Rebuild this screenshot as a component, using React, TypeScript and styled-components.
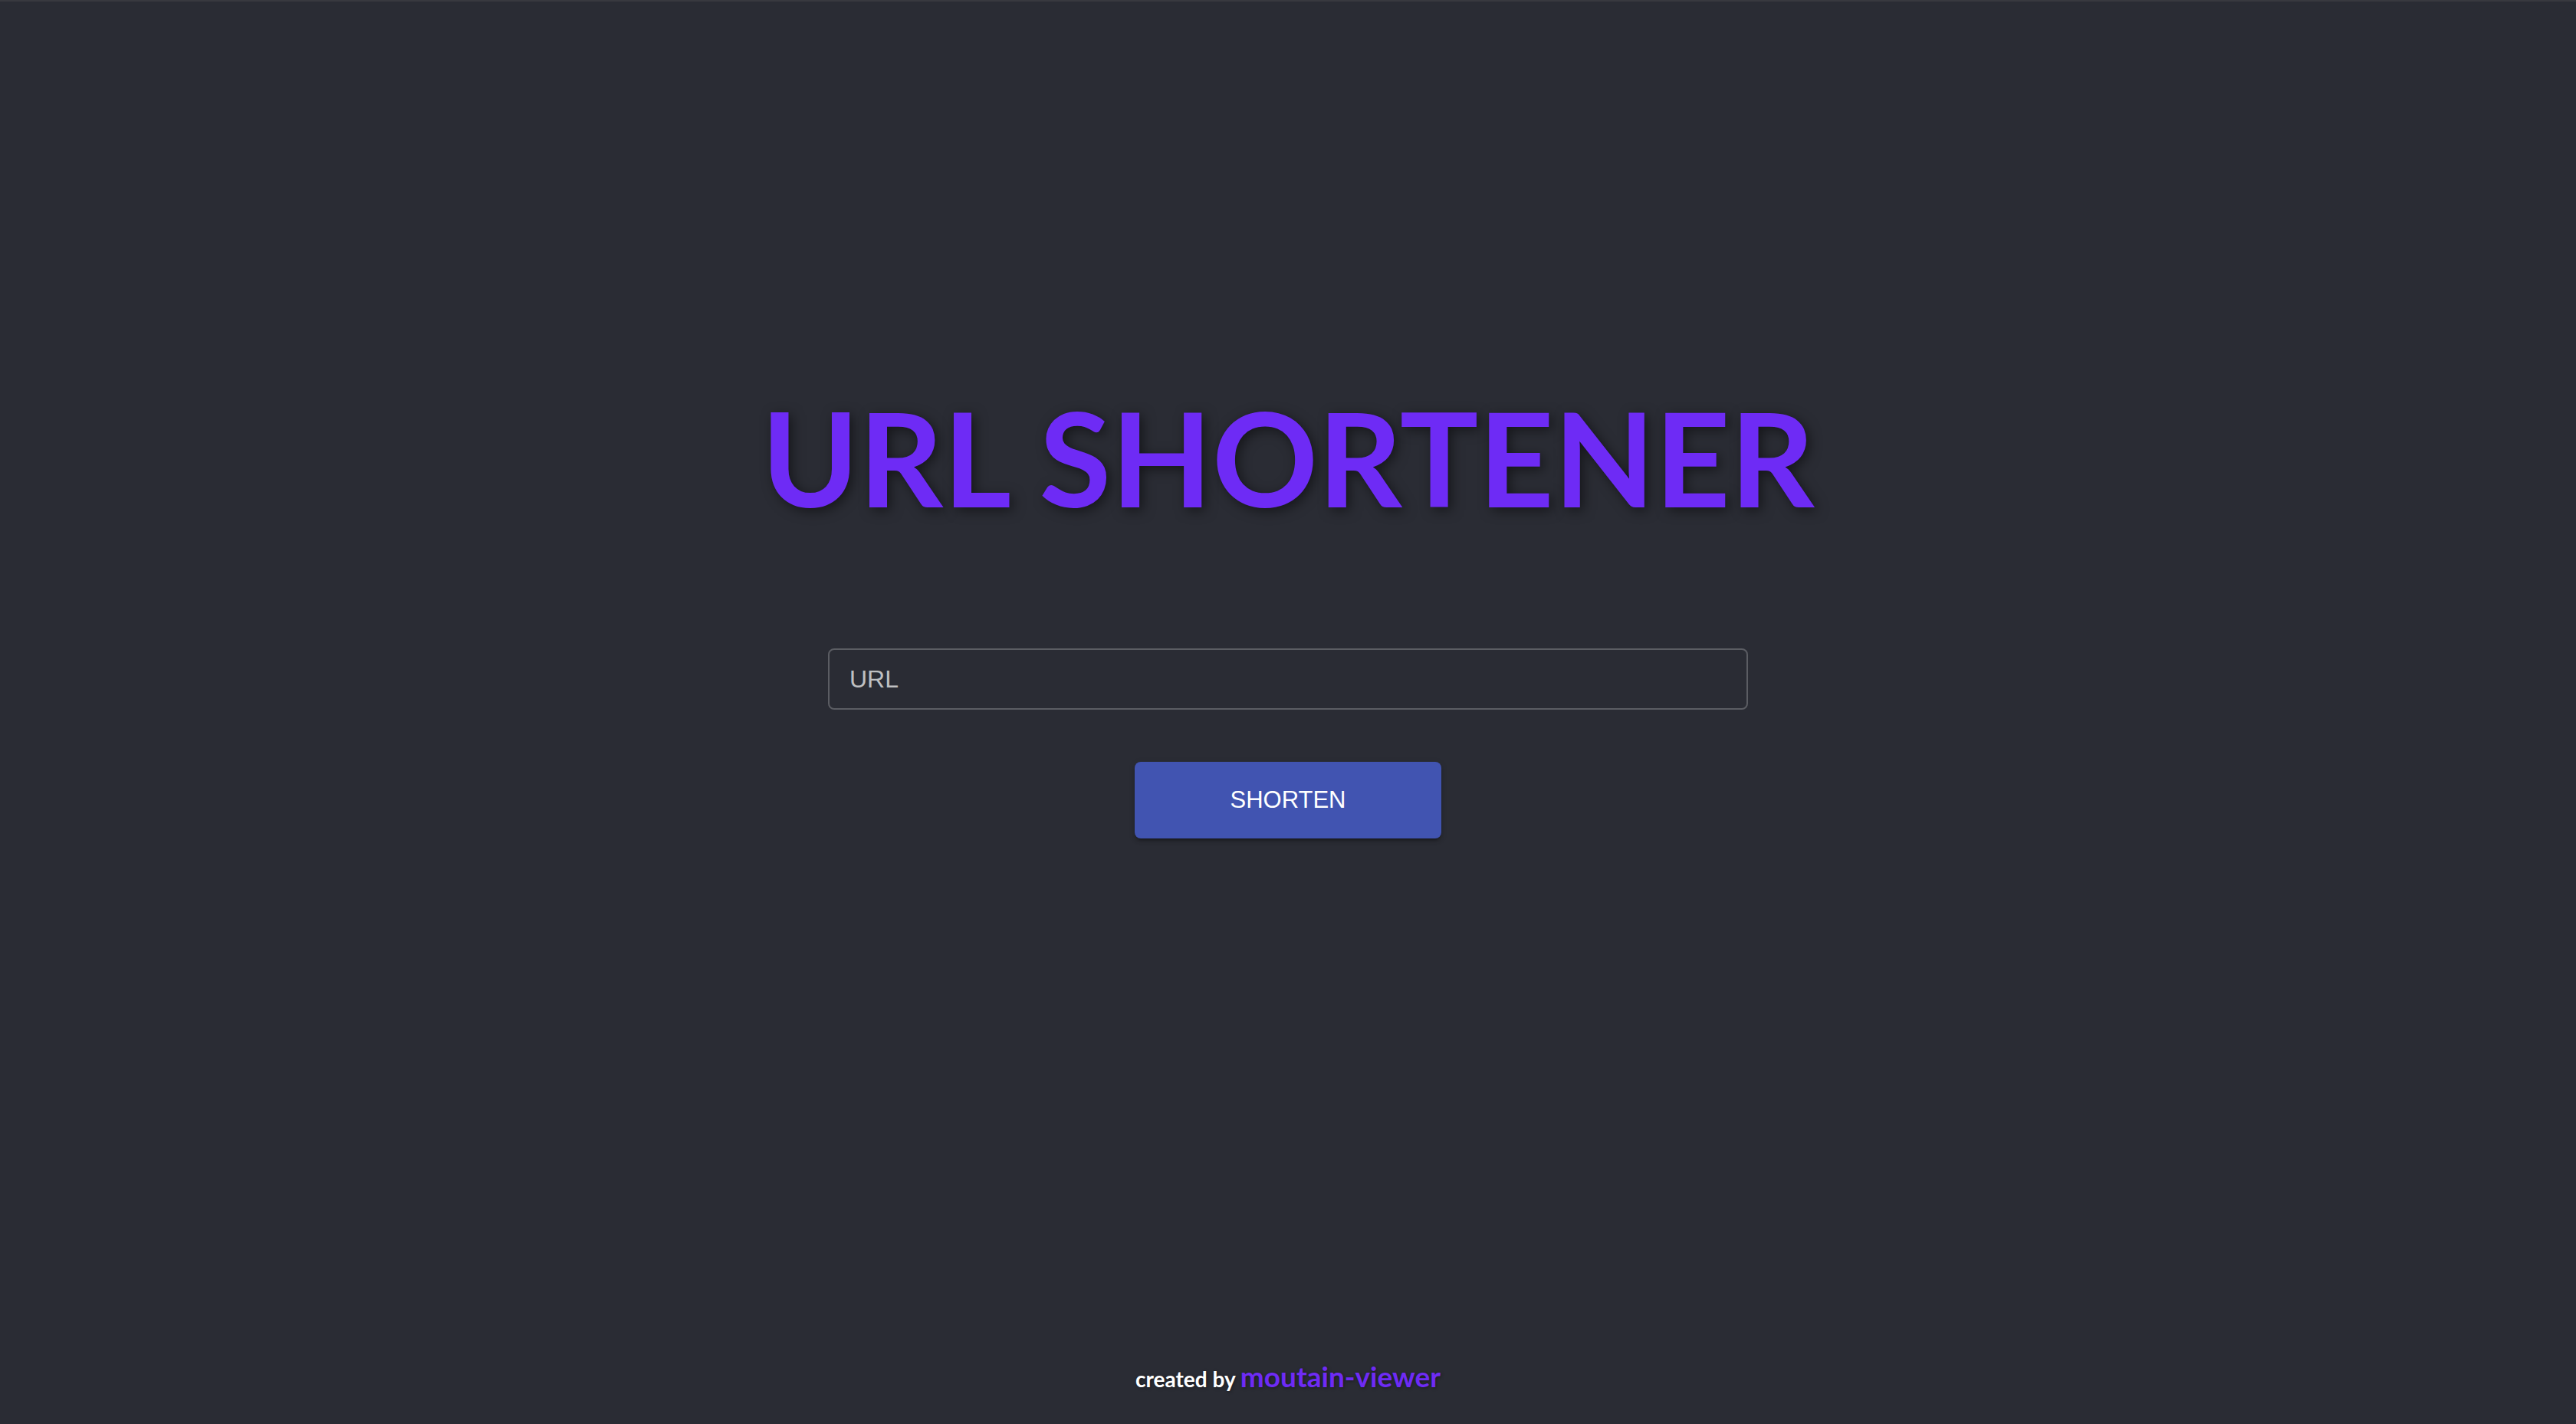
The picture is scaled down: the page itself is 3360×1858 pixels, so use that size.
import React from "react";
import styled, { createGlobalStyle } from "styled-components";

const GlobalStyle = createGlobalStyle`
  *, *::before, *::after { box-sizing: border-box; }
  body {
    margin: 0;
    background: #2a2c34;
    font-family: Lato, "Open Sans", sans-serif;
  }
`;

const Page = styled.div`
  display: flex;
  flex-direction: column;
  min-height: 100vh;
  border-top: 2px solid #38393f;
`;

const Main = styled.main`
  flex: 1;
  display: flex;
  flex-direction: column;
  align-items: center;
  padding: 494px 32px 64px;
`;

const Title = styled.h1`
  margin: 0 0 150px;
  color: #6e2bf5;
  font-size: 171px;
  font-weight: 700;
  line-height: 200px;
  text-align: center;
  text-shadow: 4px 4px 16px rgba(0, 0, 0, 0.5);
`;

const Form = styled.form`
  display: flex;
  flex-direction: column;
  align-items: center;
  gap: 68px;
  width: 100%;
  max-width: 1200px;
`;

const UrlInput = styled.input`
  width: 100%;
  height: 80px;
  padding: 0 26px;
  border: 2px solid #5b5d63;
  border-radius: 8px;
  outline: none;
  background: transparent;
  color: #ffffff;
  font-family: "Liberation Sans", Arial, sans-serif;
  font-size: 32px;

  &::placeholder {
    color: #bfc0c2;
    opacity: 1;
  }
`;

const ShortenButton = styled.button`
  width: 400px;
  height: 100px;
  border: 0;
  border-radius: 8px;
  background: #4154b1;
  color: #ffffff;
  font-family: "Liberation Sans", Arial, sans-serif;
  font-size: 31px;
  text-transform: uppercase;
  cursor: pointer;
  box-shadow:
    0 6px 2px -4px rgba(0, 0, 0, 0.2),
    0 4px 4px rgba(0, 0, 0, 0.14),
    0 2px 10px rgba(0, 0, 0, 0.12);
`;

const Footer = styled.footer`
  padding-bottom: 35px;
  color: #ffffff;
  font-size: 28px;
  font-weight: 700;
  line-height: 48px;
  text-align: center;
  text-shadow: 1px 1px 4px rgba(0, 0, 0, 0.4);
`;

const AuthorLink = styled.a`
  color: #6e2bf5;
  font-size: 37px;
  text-decoration: none;
`;

export default function App() {
  return (
    <>
      <GlobalStyle />
      <Page>
        <Main>
          <Title>URL SHORTENER</Title>
          <Form onSubmit={(event) => event.preventDefault()}>
            <UrlInput type="text" placeholder="URL" aria-label="URL" />
            <ShortenButton type="submit">Shorten</ShortenButton>
          </Form>
        </Main>
        <Footer>
          created by <AuthorLink href="#">moutain-viewer</AuthorLink>
        </Footer>
      </Page>
    </>
  );
}
